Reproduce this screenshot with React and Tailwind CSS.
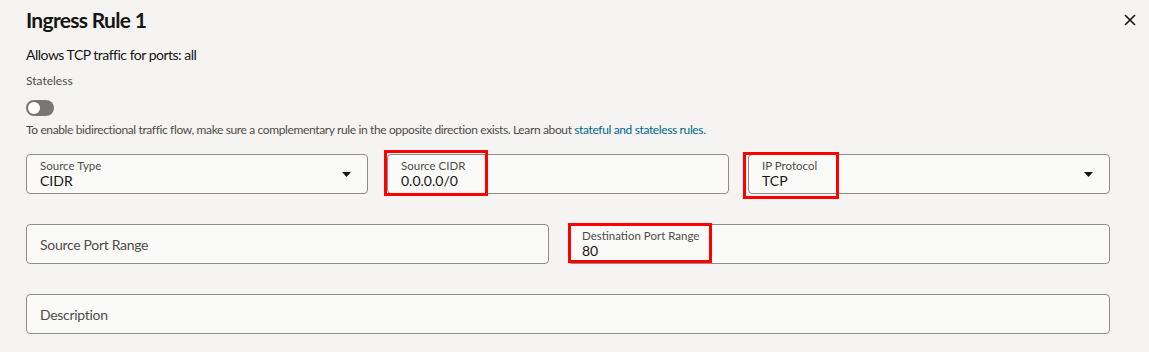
import React from 'react';

const Field = ({ label, value, placeholder, select, mark, className = '' }) => (
  <div className={`relative h-10 rounded-[4px] border border-[#8f8d8a] bg-[#fafaf9] ${className}`}>
    {placeholder ? (
      <div className="flex h-full items-center px-[13px] text-[14px] tracking-[-0.3px] text-[#4f4c49]">{placeholder}</div>
    ) : (
      <div className="flex h-full flex-col justify-center px-[13px] leading-none">
        <span className="text-[11.5px] text-[#4f4c49]">{label}</span>
        <span className="mt-[3px] text-[14px] text-[#161513]">{value}</span>
      </div>
    )}
    {select && (
      <svg className="absolute right-[16px] top-[17px]" width="9" height="5" viewBox="0 0 9 5">
        <path d="M0 0h9L4.5 5z" fill="#161513" />
      </svg>
    )}
    {mark && <div className={`pointer-events-none absolute border-[3px] border-[#ff0000] ${mark}`} />}
  </div>
);

export default function App() {
  return (
    <div className="relative h-[352px] w-[1149px] overflow-hidden bg-[#f5f4f2] pl-[26px] pr-[39px] pt-[5px] font-['Lato',sans-serif] text-[#161513]">
      <button className="absolute right-[12px] top-[13px] text-[#161513]" aria-label="Close">
        <svg width="14" height="14" viewBox="0 0 14 14">
          <path d="M2 2l10 10M12 2L2 12" stroke="#161513" strokeWidth="1.6" />
        </svg>
      </button>

      <h1 className="text-[21px] font-bold leading-[30px] tracking-[-0.7px]">Ingress Rule 1</h1>
      <p className="mt-[11px] text-[14px] leading-[18px] tracking-[-0.5px]">Allows TCP traffic for ports: all</p>
      <p className="mt-[9px] text-[12px] leading-[16px] text-[#4f4c49]">Stateless</p>

      <div className="mt-[11px] flex h-[16px] w-[28px] items-center rounded-full bg-[#7a7773] px-[2px]">
        <div className="h-[12px] w-[12px] rounded-full bg-white" />
      </div>

      <p className="mt-[6px] text-[12px] leading-[16px] tracking-[-0.37px] text-[#4f4c49]">
        To enable bidirectional traffic flow, make sure a complementary rule in the opposite direction exists. Learn about{' '}
        <span className="text-[#00688c]">stateful and stateless rules.</span>
      </p>

      <div className="mt-[16px] grid grid-cols-[342px_342px_1fr] gap-x-[19px]">
        <Field label="Source Type" value="CIDR" select />
        <Field label="Source CIDR" value="0.0.0.0/0" mark="-left-[4px] -top-[5px] h-[46px] w-[104px]" />
        <Field label="IP Protocol" value="TCP" select mark="-left-[6px] -top-[3px] h-[47px] w-[96px]" />
      </div>

      <div className="mt-[30px] grid grid-cols-[523px_1fr] gap-x-[19px]">
        <Field placeholder="Source Port Range" />
        <Field label="Destination Port Range" value="80" mark="-left-[1px] -top-[2px] h-[40px] w-[144px]" />
      </div>

      <div className="mt-[30px]">
        <Field placeholder="Description" />
      </div>
    </div>
  );
}
